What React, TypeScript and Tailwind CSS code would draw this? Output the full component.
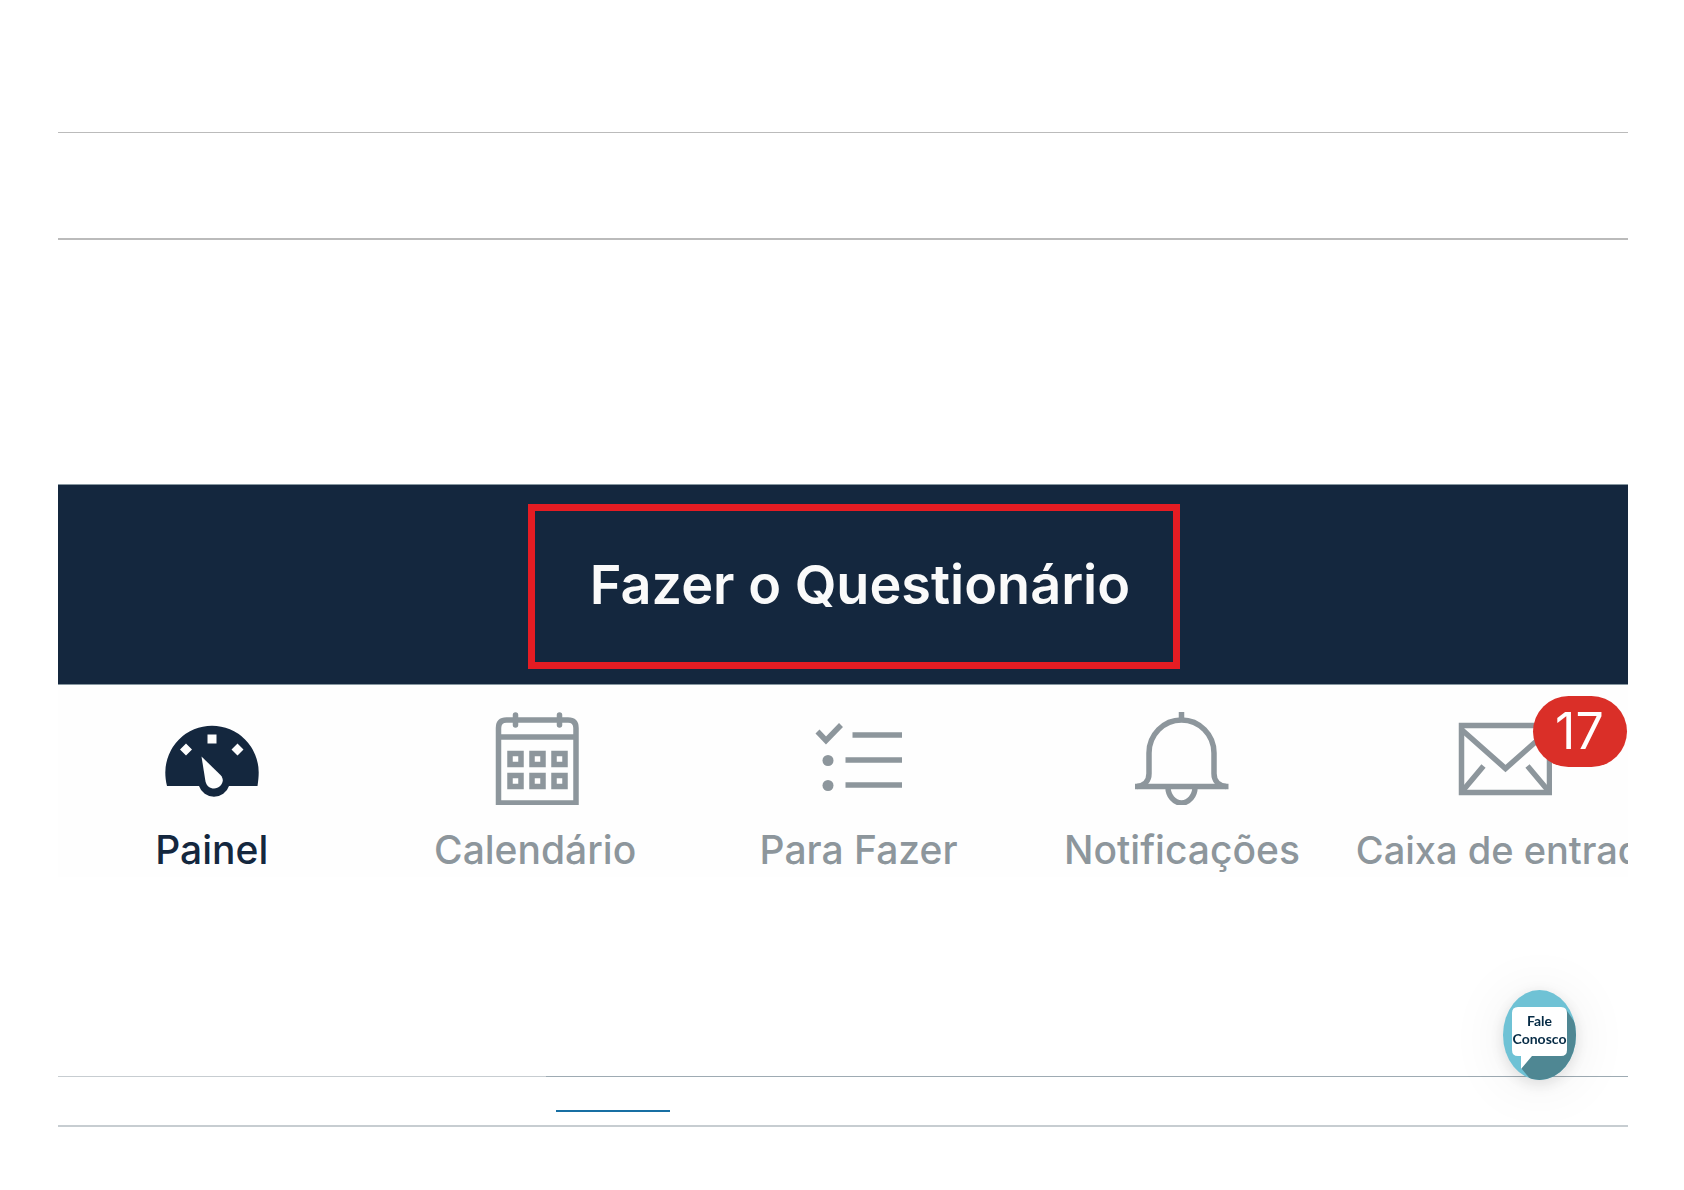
import type { ReactNode } from 'react'

// Tab bar icons share a 94x94 canvas
function DashboardIcon() {
  return (
    <svg viewBox="0 0 94 94" className="w-[94px] h-[94px]" aria-hidden="true">
      <path
        fill="currentColor"
        d="M2 75C.8 70 .3 66 .3 61.500a46.700 46.700 0 0 1 93.400 0c0 4.500-.5 8.500-1.200 13.500H64a15.800 15.800 0 0 1-30 0Z"
      />
      <g fill="#fefefe">
        <path d="M42.500 23.500h9v9h-9zM21 32.500l6 6-6 6-6-6zM72.500 32.500l6 6-6 6-6-6z" />
        <path d="M36.500 45.500l19 18.500c5.500 6 0 13.500-6.500 13.500-4 0-7.500-2.500-8.500-7z" />
      </g>
    </svg>
  )
}

function CalendarIcon() {
  return (
    <svg viewBox="0 0 94 94" className="w-[94px] h-[94px]" fill="none" stroke="currentColor" strokeWidth="5.5" aria-hidden="true">
      <path d="M10.500 92V17q0-8 8-8H80q8 0 8 8v75zM10.500 26H88" />
      <path strokeLinecap="round" d="M27.500 4v10M71.500 4v10" />
      <path d="M22 42.500h11v11H22zM44 42.500h11v11H44zM66 42.500h11v11H66zM22 64.500h11v11H22zM44 64.500h11v11H44zM66 64.500h11v11H66z" />
    </svg>
  )
}

function TodoIcon() {
  return (
    <svg viewBox="0 0 94 94" className="w-[94px] h-[94px]" fill="none" stroke="currentColor" strokeWidth="5.5" aria-hidden="true">
      <path d="M5.500 20.500l8.500 9L29 14M40.500 24H90M33.500 49H90M33.500 74H90" />
      <g fill="currentColor" stroke="none">
        <circle cx="16" cy="49.500" r="5.500" />
        <circle cx="16" cy="74.500" r="5.500" />
      </g>
    </svg>
  )
}

function BellIcon() {
  return (
    <svg viewBox="0 0 94 94" className="w-[94px] h-[94px]" fill="none" stroke="currentColor" strokeWidth="5.5" aria-hidden="true">
      <path d="M46.500 1v9M0 75.500h93.500" />
      <path d="M2 75.500c8-1 12-6 12-13V42a32.500 33 0 0 1 65 0v20.500c0 7 4 12 12 13" />
      <path d="M33 76a13.500 16 0 0 0 27 0" />
    </svg>
  )
}

function InboxIcon() {
  return (
    <svg viewBox="0 0 94 94" className="w-[94px] h-[94px]" fill="none" stroke="currentColor" strokeWidth="5.5" aria-hidden="true">
      <path d="M3.500 14.500h88v67h-88z" />
      <path d="M4 19l43.500 38.500L91 19M4.500 80L25.500 55M90.500 80L69.500 55" />
    </svg>
  )
}

const tabs: { label: string; icon: ReactNode; active?: boolean; badge?: number }[] = [
  { label: 'Painel', icon: <DashboardIcon />, active: true },
  { label: 'Calendário', icon: <CalendarIcon /> },
  { label: 'Para Fazer', icon: <TodoIcon /> },
  { label: 'Notificações', icon: <BellIcon /> },
  { label: 'Caixa de entrada', icon: <InboxIcon />, badge: 17 },
]

function TabBar() {
  return (
    <nav className="overflow-hidden bg-[#fefefe]">
      {/* Wider than its frame, so the last label is cut at the edge */}
      <div className="-ml-2 grid w-[103%] grid-cols-5">
        {tabs.map((tab) => (
          <button
            key={tab.label}
            type="button"
            className={`flex flex-col items-center pt-[26px] pb-[3px] ${tab.active ? 'text-[#14273e]' : 'text-[#8d969c]'}`}
          >
            <span className="relative">
              {tab.icon}
              {tab.badge && (
                <span className="absolute -top-[15px] left-[75px] flex h-[71px] w-[94px] items-center justify-center rounded-full bg-[#da2f28] pr-0.5 pb-0.5 text-[50px] leading-none text-white">
                  {tab.badge}
                </span>
              )}
            </span>
            <span className={`mt-[21px] leading-[48px] font-medium whitespace-nowrap ${tab.badge ? 'pl-2 text-[38px]' : 'text-[39px]'}`}>
              {tab.label}
            </span>
          </button>
        ))}
      </div>
    </nav>
  )
}

function ContactButton() {
  return (
    <button
      type="button"
      className="fixed right-[108px] bottom-[110px] h-[90px] w-[73px] overflow-hidden rounded-[50%] bg-[#6fc2d5] shadow-[0_4px_16px_rgba(0,0,0,0.12),0_4px_60px_rgba(0,0,0,0.08)]"
    >
      <svg viewBox="0 0 73 90" className="absolute inset-0 h-full w-full" aria-hidden="true">
        <path fill="#4f8793" d="M62 18l11 16v56H28L18 78z" />
        <path fill="#fff" d="M15 17h43q6 0 6 6v37q0 6-6 6H29L18 79V66h-3q-6 0-6-6V23q0-6 6-6z" />
      </svg>
      <span className="relative block pb-2.5 font-[Lato,sans-serif] text-sm leading-[18px] font-bold text-[#062b45]">
        Fale
        <br />
        Conosco
      </span>
    </button>
  )
}

export default function App() {
  return (
    <div className="min-h-screen bg-white pr-14 pl-[58px] font-[Inter,sans-serif]">
      <header className="pt-[132px]">
        <hr className="h-px border-0 bg-[#bbbbbb]" />
        <hr className="mt-[105px] h-0.5 border-0 bg-[#bbbbbb]" />
      </header>

      <main className="mt-[244px]">
        <div className="flex justify-center border-y border-[#8797a0] bg-[#14273e] pt-[19px] pb-[15px] pl-[22px]">
          <button
            type="button"
            className="h-[165px] w-[652px] border-[7px] border-[#e51c23] pb-1 pl-3 text-[54px] leading-none font-semibold text-[#fafafa]"
          >
            Fazer o Questionário
          </button>
        </div>
        <TabBar />
      </main>

      <footer className="mt-[199px]">
        <div className="flex">
          <hr className="h-px w-[488px] border-0 bg-[#c7cdd1]" />
          <hr className="h-px flex-1 border-0 bg-[#9eabb3]" />
        </div>
        <a href="#" aria-label="Link" className="mt-[33px] ml-[498px] block h-0.5 w-[114px] bg-[#186fa3]" />
        <hr className="mt-[13px] h-0.5 border-0 bg-[#c7cdd1]" />
      </footer>

      <ContactButton />
    </div>
  )
}
